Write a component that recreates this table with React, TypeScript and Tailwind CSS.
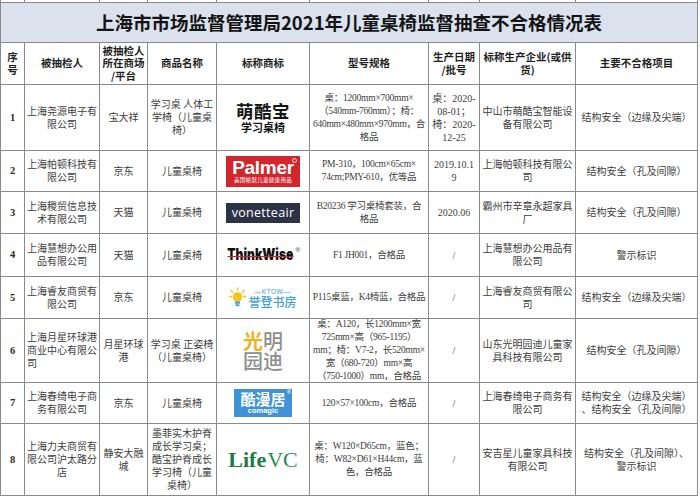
import React from "react";

const BODY = "font-['Liberation_Serif','Noto_Sans_CJK_SC',serif]";
const CJK = "font-['Noto_Sans_CJK_SC','Liberation_Sans',sans-serif]";

function Cell({
  lines,
  left = false,
  tight = false,
}: {
  lines: string[];
  left?: boolean;
  tight?: boolean;
}) {
  return (
    <div
      className={`bg-white flex flex-col justify-center overflow-hidden leading-[13px] text-[#3d3d3d] ${BODY} ${
        tight ? "text-[9.5px] tracking-[-0.25px]" : "text-[10px]"
      } ${left ? "items-start text-left pl-[2px]" : "items-center text-center"}`}
    >
      {lines.map((l, i) => (
        <span key={i} className="whitespace-nowrap">
          {l}
        </span>
      ))}
    </div>
  );
}

function Head({ lines }: { lines: string[] }) {
  return (
    <div
      className={`bg-white flex flex-col items-center justify-center text-center text-[10.5px] leading-[12.5px] font-bold text-[#1f1f1f] ${CJK}`}
    >
      {lines.map((l, i) => (
        <span key={i} className="whitespace-nowrap">
          {l}
        </span>
      ))}
    </div>
  );
}

function Num({ n }: { n: string }) {
  return (
    <div className="bg-white flex items-center justify-center text-[10.5px] font-bold text-[#2a2a2a] font-['Liberation_Serif',serif]">
      {n}
    </div>
  );
}

function LogoCell({ children }: { children: React.ReactNode }) {
  return (
    <div className="bg-white flex items-center justify-center overflow-hidden">
      {children}
    </div>
  );
}

function LogoMengku() {
  return (
    <div className={`flex flex-col items-center text-[#151515] ${CJK}`}>
      <span className="text-[17.5px] leading-[19px] font-bold tracking-[0.5px]">萌酷宝</span>
      <span className="text-[11px] leading-[13px] font-bold mt-[1px]">学习桌椅</span>
    </div>
  );
}

function LogoPalmer() {
  return (
    <div className="relative w-[74px] h-[31px] bg-[#d3262c] flex flex-col items-center justify-center">
      <span className="text-white font-bold font-['Liberation_Sans',sans-serif] text-[19px] leading-[18px] tracking-[-0.3px]">
        Palmer
      </span>
      <span className={`text-white text-[5.5px] leading-[7px] tracking-[0.3px] ${CJK}`}>
        美国帕默儿童健康用品
      </span>
      <span className="absolute right-[3px] top-[2px] w-[5px] h-[5px] rounded-full border border-white/80"></span>
    </div>
  );
}

function LogoVonette() {
  return (
    <div className="w-[74px] h-[20px] bg-[#2c3346] flex items-center justify-center">
      <span className="text-white font-['Open_Sans',sans-serif] text-[12.5px] leading-[14px] font-medium tracking-[0.3px]">
        vonetteair
      </span>
    </div>
  );
}

function LogoThinkWise() {
  return (
    <div className="relative flex items-start">
      <span className="relative inline-block scale-x-[0.78] origin-center text-[15.5px] leading-[16px] font-black text-[#111] font-['Inter',sans-serif] -mx-[8px]">
        ThinkWise
        <span className="absolute left-0 right-0 top-[9px] h-[1px] bg-[#d1252b]"></span>
      </span>
      <span className="text-[6px] leading-[6px] text-[#555] ml-[1px]">®</span>
    </div>
  );
}

function LogoKtow() {
  return (
    <div className="flex items-center gap-[2px]">
      <svg width="17" height="22" viewBox="0 0 17 22">
        <g stroke="#f2c21c" strokeWidth="1.4" strokeLinecap="round">
          <line x1="8.5" y1="1" x2="8.5" y2="3" />
          <line x1="2" y1="3.5" x2="3.4" y2="5" />
          <line x1="15" y1="3.5" x2="13.6" y2="5" />
          <line x1="0.5" y1="9.5" x2="2.3" y2="9.5" />
          <line x1="14.7" y1="9.5" x2="16.5" y2="9.5" />
        </g>
        <circle cx="8.5" cy="10" r="4.8" fill="#f5c51a" />
        <rect x="6" y="14.5" width="5" height="2.2" fill="#3b9ad8" />
        <rect x="6.6" y="17.3" width="3.8" height="1.8" fill="#3b9ad8" />
      </svg>
      <div className="flex flex-col items-center">
        <span className="text-[6.5px] leading-[7px] text-[#3b9ad8] font-['Liberation_Sans',sans-serif] tracking-[0.5px]">
          —KTOW—
        </span>
        <span className={`text-[12px] leading-[13px] text-[#3fa0dc] font-medium ${CJK}`}>誉登书房</span>
      </div>
    </div>
  );
}

function LogoGuangming() {
  return (
    <div className={`flex flex-col text-[20px] leading-[20px] ${CJK}`}>
      <div className="whitespace-nowrap">
        <span className="text-[#f0b21f] font-bold">光</span>
        <span className="text-[#8e8e8e] font-medium">明</span>
      </div>
      <div className="text-[#8e8e8e] font-medium whitespace-nowrap">园迪</div>
    </div>
  );
}

function LogoComagic() {
  return (
    <div className="relative w-[58px] h-[28px] bg-[#3e92d8] flex flex-col items-center justify-center">
      <span className={`text-white text-[15px] leading-[16px] font-bold ${CJK}`}>酷漫居</span>
      <span className="text-white text-[7.5px] leading-[8px] font-bold font-['Liberation_Sans',sans-serif]">
        comagic
      </span>
      <span className="absolute right-[1px] top-[1px] text-[5px] leading-[5px] text-white">®</span>
    </div>
  );
}

function LogoLifeVC() {
  return (
    <div className="font-['Liberation_Serif',serif] text-[22px] leading-[24px] text-[#1f7a48]">
      <span className="font-bold">Life</span>
      <span className="ml-[1px] text-[#2c8a55]">VC</span>
    </div>
  );
}

type Row = {
  n: string;
  person: string[];
  personLeft?: boolean;
  mall: string[];
  product: string[];
  logo: React.ReactNode;
  spec: string[];
  date: string[];
  maker: string[];
  issue: string[];
};

const rows: Row[] = [
  {
    n: "1",
    person: ["上海尧源电子有", "限公司"],
    mall: ["宝大祥"],
    product: ["学习桌 人体工", "学椅（儿童桌", "椅）"],
    logo: <LogoMengku />,
    spec: ["桌：1200mm×700mm×", "（540mm-760mm）；椅：", "640mm×480mm×970mm，合", "格品"],
    date: ["桌：2020-", "08-01；", "椅：2020-", "12-25"],
    maker: ["中山市萌酷宝智能设", "备有限公司"],
    issue: ["结构安全（边缘及尖端）"],
  },
  {
    n: "2",
    person: ["上海帕顿科技有", "限公司"],
    mall: ["京东"],
    product: ["儿童桌椅"],
    logo: <LogoPalmer />,
    spec: ["PM-310，100cm×65cm×", "74cm;PMY-610，优等品"],
    date: ["2019.10.1", "9"],
    maker: ["上海帕顿科技有限公", "司"],
    issue: ["结构安全（孔及间隙）"],
  },
  {
    n: "3",
    person: ["上海稷贸信息技", "术有限公司"],
    mall: ["天猫"],
    product: ["儿童桌椅"],
    logo: <LogoVonette />,
    spec: ["B20236 学习桌椅套装，合", "格品"],
    date: ["2020.06"],
    maker: ["霸州市辛章永超家具", "厂"],
    issue: ["结构安全（孔及间隙）"],
  },
  {
    n: "4",
    person: ["上海慧想办公用", "品有限公司"],
    mall: ["天猫"],
    product: ["儿童桌椅"],
    logo: <LogoThinkWise />,
    spec: ["F1 JH001，合格品"],
    date: ["/"],
    maker: ["上海慧想办公用品有", "限公司"],
    issue: ["警示标识"],
  },
  {
    n: "5",
    person: ["上海睿友商贸有", "限公司"],
    mall: ["京东"],
    product: ["儿童桌椅"],
    logo: <LogoKtow />,
    spec: ["P115桌蓝，K4椅蓝，合格品"],
    date: ["/"],
    maker: ["上海睿友商贸有限公", "司"],
    issue: ["结构安全（边缘及尖端）"],
  },
  {
    n: "6",
    person: ["上海月星环球港", "商业中心有限公", "司"],
    personLeft: true,
    mall: ["月星环球", "港"],
    product: ["学习桌 正姿椅", "（儿童桌椅）"],
    logo: <LogoGuangming />,
    spec: [
      "桌：A120，长1200mm×宽",
      "725mm×高（965-1195）",
      "mm；椅：V7-2，长520mm×",
      "宽（680-720）mm×高",
      "（750-1000）mm，合格品",
    ],
    date: ["/"],
    maker: ["山东光明园迪儿童家", "具科技有限公司"],
    issue: ["结构安全（孔及间隙）"],
  },
  {
    n: "7",
    person: ["上海春绮电子商", "务有限公司"],
    mall: ["京东"],
    product: ["儿童桌椅"],
    logo: <LogoComagic />,
    spec: ["120×57×100cm，合格品"],
    date: ["/"],
    maker: ["上海春绮电子商务有", "限公司"],
    issue: ["结构安全（边缘及尖端）", "、结构安全（孔及间隙）"],
  },
  {
    n: "8",
    person: ["上海力夫商贸有", "限公司沪太路分", "店"],
    mall: ["静安大融", "城"],
    product: ["墨菲实木护脊", "成长学习桌；", "酷宝护脊成长", "学习椅（儿童", "桌椅）"],
    logo: <LogoLifeVC />,
    spec: ["桌：W120×D65cm，蓝色；", "椅：W82×D61×H44cm，蓝", "色，合格品"],
    date: ["/"],
    maker: ["安吉星儿童家具科技", "有限公司"],
    issue: ["结构安全（孔及间隙）、", "警示标识"],
  },
];

export default function App() {
  return (
    <div className="w-[700px] h-[497px] bg-white overflow-hidden">
      <div className="w-[698px] bg-[#8a8a8a] pl-px pr-px pb-px grid gap-px grid-cols-[23px_74px_47px_68px_92px_118px_50px_95px_121px] grid-rows-[2px_39px_41px_65px_40px_41px_42px_41px_63px_40px_71px]">
        {Array.from({ length: 9 }).map((_, i) => (
          <div key={i} className="bg-white" />
        ))}
        <div
          className={`col-span-9 bg-[#dbe2ee] flex items-center justify-center text-[18.5px] font-bold text-[#141414] ${CJK}`}
        >
          上海市市场监督管理局2021年儿童桌椅监督抽查不合格情况表
        </div>
        <Head lines={["序", "号"]} />
        <Head lines={["被抽检人"]} />
        <Head lines={["被抽检人", "所在商场", "/平台"]} />
        <Head lines={["商品名称"]} />
        <Head lines={["标称商标"]} />
        <Head lines={["型号规格"]} />
        <Head lines={["生产日期", "/批号"]} />
        <Head lines={["标称生产企业(或供", "货)"]} />
        <Head lines={["主要不合格项目"]} />
        {rows.map((r) => (
          <React.Fragment key={r.n}>
            <Num n={r.n} />
            <Cell lines={r.person} left={r.personLeft} />
            <Cell lines={r.mall} />
            <Cell lines={r.product} />
            <LogoCell>{r.logo}</LogoCell>
            <Cell lines={r.spec} tight />
            <Cell lines={r.date} />
            <Cell lines={r.maker} />
            <Cell lines={r.issue} />
          </React.Fragment>
        ))}
      </div>
    </div>
  );
}
